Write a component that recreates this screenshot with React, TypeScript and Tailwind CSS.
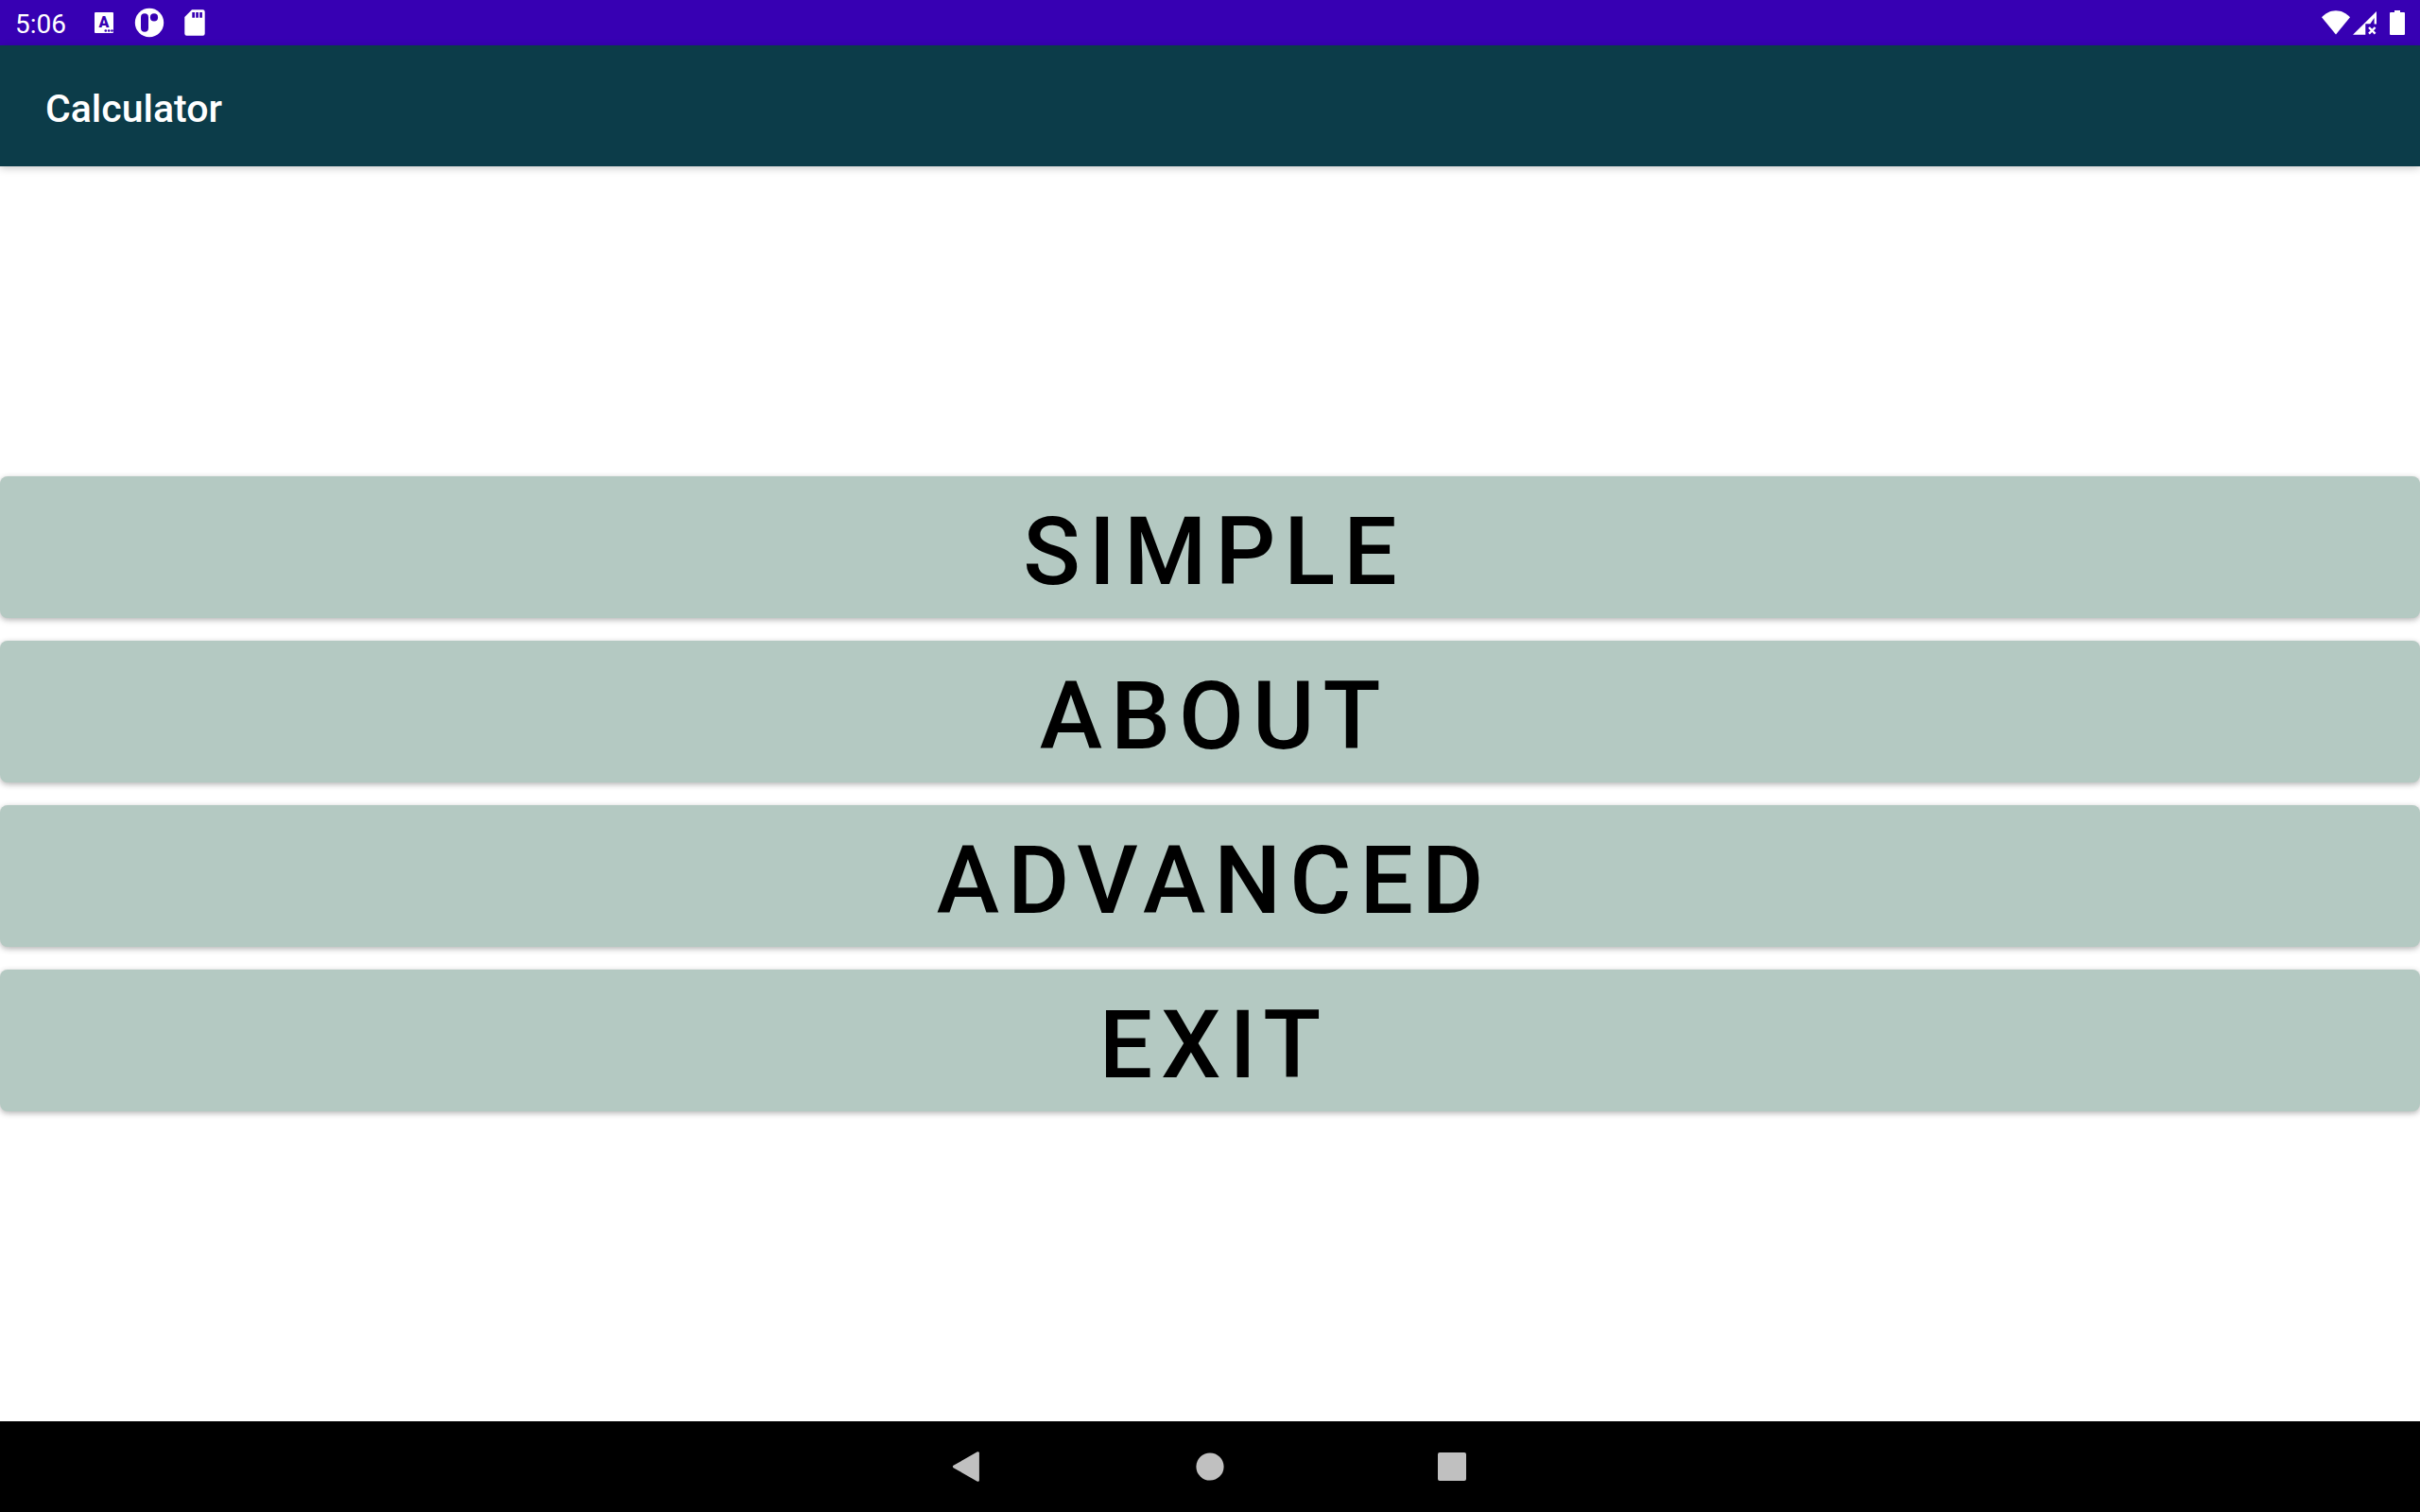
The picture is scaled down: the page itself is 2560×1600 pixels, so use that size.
import React from "react";

const actions = ["Simple", "About", "Advanced", "Exit"];

function NotificationIcons() {
  return (
    <div className="flex items-center gap-4">
      <svg className="h-8 w-8" viewBox="0 0 32 32" aria-hidden="true">
        <rect x="6" y="5" width="20" height="22" rx="1" fill="#fff" />
        <text x="16" y="20.5" textAnchor="middle" fontSize="16" fontWeight="900" fill="#3700b3" fontFamily="Roboto, sans-serif">A</text>
        <circle cx="17.8" cy="24.5" r="1.3" fill="#3700b3" />
        <circle cx="21.2" cy="24.5" r="1.3" fill="#3700b3" />
        <circle cx="24.5" cy="24.5" r="1.3" fill="#3700b3" />
      </svg>
      <svg className="h-8 w-8" viewBox="0 0 32 32" aria-hidden="true">
        <circle cx="16" cy="16" r="15.2" fill="#fff" />
        <rect x="7" y="6.3" width="8" height="19.4" rx="4" fill="#3700b3" />
        <circle cx="21" cy="10.4" r="4.1" fill="#3700b3" />
      </svg>
      <svg className="h-8 w-8" viewBox="0 0 32 32" aria-hidden="true">
        <path d="M13 2.3H24.5a2.2 2.2 0 0 1 2.2 2.2V27.5a2.2 2.2 0 0 1-2.2 2.2H7.5a2.2 2.2 0 0 1-2.2-2.2V10z" fill="#fff" />
        <path d="M13.3 5h2.7v5.7h-2.7zM17.2 5h2.7v5.7h-2.7zM21.2 5h2.7v5.7h-2.7z" fill="#3700b3" />
      </svg>
    </div>
  );
}

function SystemIcons() {
  return (
    <svg className="h-8 w-[92px]" viewBox="0 0 92 32" aria-hidden="true" fill="#fff">
      <path d="M0 10.2C4 6 9 3.2 15 3.2S26 6 30 10.2L15 28.5z" />
      <path d="M58 4v13.5h-2.4V11L51.3 17.2h-5v11.6H33z" />
      <path d="M50 21l6.6 6.6M56.6 21L50 27.6" stroke="#fff" strokeWidth="2.4" />
      <path d="M77 3h6v2h4a1 1 0 0 1 1 1V28a1 1 0 0 1-1 1H73a1 1 0 0 1-1-1V6a1 1 0 0 1 1-1h4z" />
    </svg>
  );
}

export default function App() {
  return (
    <div className="flex min-h-screen flex-col bg-white font-[Roboto,sans-serif]">
      <div className="flex h-12 items-center justify-between bg-[#3700b3] pr-3 pl-4 text-white">
        <div className="flex items-center gap-6">
          <span className="pt-1 text-[28px] leading-8">5:06</span>
          <NotificationIcons />
        </div>
        <SystemIcons />
      </div>
      <header className="flex h-32 items-center bg-[#0c3c49] px-12 pt-1.5 text-white shadow-[0_2px_8px_rgba(0,0,0,0.22)]">
        <h1 className="text-[41px] leading-12 font-medium">Calculator</h1>
      </header>
      <main className="flex flex-1 flex-col justify-center gap-6">
        {actions.map((label) => (
          <button
            key={label}
            type="button"
            className="h-[150px] w-full rounded-lg bg-[#b4c9c2] pt-2.5 pl-[9px] text-[100px] leading-none font-medium tracking-[9px] text-black uppercase shadow-[0_2px_6px_rgba(0,0,0,0.3)]"
          >
            {label}
          </button>
        ))}
      </main>
      <nav className="flex h-24 items-center justify-center gap-48 bg-black">
        <button type="button" aria-label="Back" className="h-16 w-16">
          <svg className="h-16 w-16" viewBox="0 0 64 64" aria-hidden="true">
            <path d="M42.6 17.5V46.5L17.2 32z" fill="#c0c0c0" stroke="#c0c0c0" strokeWidth="2.6" strokeLinejoin="round" />
          </svg>
        </button>
        <button type="button" aria-label="Home" className="h-16 w-16">
          <svg className="h-16 w-16" viewBox="0 0 64 64" aria-hidden="true">
            <circle cx="32" cy="32" r="14.6" fill="#c0c0c0" />
          </svg>
        </button>
        <button type="button" aria-label="Recent apps" className="h-16 w-16">
          <svg className="h-16 w-16" viewBox="0 0 64 64" aria-hidden="true">
            <rect x="17" y="17" width="30" height="30" rx="2" fill="#c0c0c0" />
          </svg>
        </button>
      </nav>
    </div>
  );
}
